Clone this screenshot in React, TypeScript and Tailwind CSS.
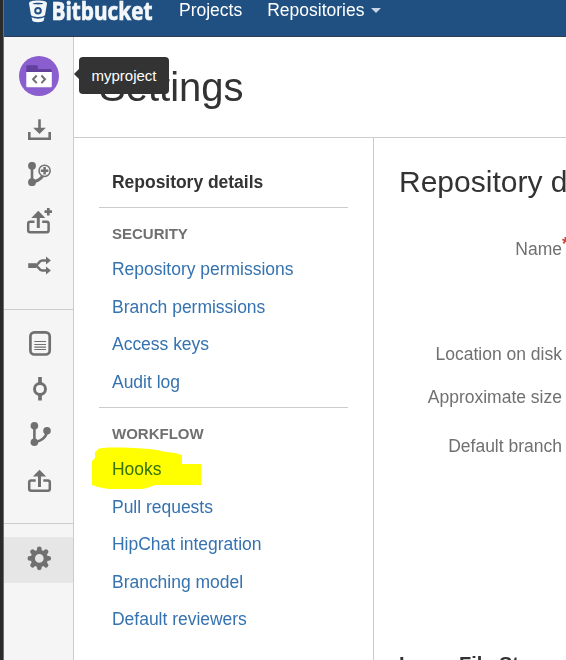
import React from 'react';

type IconProps = { children: React.ReactNode };

function Icon({ children }: IconProps) {
  return (
    <svg width="27" height="28" viewBox="0 0 27 28" fill="none" stroke="#707070" strokeWidth="2.6">
      {children}
    </svg>
  );
}

function SideButton({ children, active = false }: IconProps & { active?: boolean }) {
  return (
    <button
      className={`flex h-[46px] w-full shrink-0 items-center justify-center ${active ? 'bg-[#e6e6e6]' : ''}`}
    >
      {children}
    </button>
  );
}

function CloneIcon() {
  return (
    <Icon>
      <path d="M14.5 3.3V13" />
      <path d="M8.2 11.7h12.6L14.5 18z" fill="#707070" stroke="none" />
      <path d="M4.3 16v6.7h20.4V16" />
    </Icon>
  );
}

function CreateBranchIcon() {
  return (
    <Icon>
      <path d="M7 4v16" />
      <path d="M7 20c4-.3 7.500-2.200 10.500-5.500" strokeWidth="3" />
      <circle cx="7" cy="3.8" r="3.900" fill="#707070" stroke="none" />
      <circle cx="7" cy="20.200" r="3.900" fill="#707070" stroke="none" />
      <circle cx="19.600" cy="8.800" r="5.600" fill="#f5f5f5" strokeWidth="1.500" />
      <path d="M19.600 5v7.600M15.800 8.800h7.600" strokeWidth="2.500" />
    </Icon>
  );
}

function CreatePullRequestIcon() {
  return (
    <Icon>
      <path d="M13.300 20V9" strokeWidth="3" />
      <path d="M6.300 9.900h14L13.300 2.800z" fill="#707070" stroke="none" />
      <path d="M9.500 13.800H5.200a2 2 0 0 0-2 2v6.400a2 2 0 0 0 2 2h16.400a2 2 0 0 0 2-2v-6.400a2 2 0 0 0-2-2H17.200" strokeWidth="2.500" />
      <path d="M23.300 0v7.400M19.500 3.700H27" strokeWidth="2.700" />
    </Icon>
  );
}

function ForkIcon() {
  return (
    <Icon>
      <path d="M3.200 11.600h8.200" strokeWidth="4.800" />
      <path d="M22 6.500h-4.800c-3.200 0-4.200 5-6.400 5 2.200 0 3.200 5 6.400 5H22" strokeWidth="2.500" />
      <path d="M21 2.600 25.900 6.500 21 10.400zM21 12.600l4.900 3.900-4.900 3.900z" fill="#707070" stroke="none" />
    </Icon>
  );
}

function SourceIcon() {
  return (
    <Icon>
      <rect x="5.400" y="2.300" width="19.300" height="22.200" rx="4" strokeWidth="2.700" />
      <path d="M9.300 11.500h11.700M9.300 14.500h11.700M9.300 17.200h11.700M9.300 19.500h11.700" strokeWidth="1.200" />
    </Icon>
  );
}

function CommitsIcon() {
  return (
    <Icon>
      <circle cx="15" cy="13" r="5.500" strokeWidth="2.900" />
      <path d="M15 1v6M15 19v5.600" strokeWidth="3.700" />
    </Icon>
  );
}

function BranchesIcon() {
  return (
    <Icon>
      <path d="M9.400 4v16c5.500 0 12-4 12.800-11.500" strokeWidth="2.600" />
      <circle cx="9.400" cy="3.800" r="3.800" fill="#707070" stroke="none" />
      <circle cx="9.400" cy="20.200" r="3.800" fill="#707070" stroke="none" />
      <circle cx="22" cy="8.800" r="3.800" fill="#707070" stroke="none" />
    </Icon>
  );
}

function PullRequestsIcon() {
  return (
    <Icon>
      <path d="M14.500 19V8" strokeWidth="3" />
      <path d="M7.800 8.600h13.400L14.500 1.800z" fill="#707070" stroke="none" />
      <path d="M10.700 12.500H6.200a2 2 0 0 0-2 2v6.300a2 2 0 0 0 2 2h16.600a2 2 0 0 0 2-2v-6.300a2 2 0 0 0-2-2H18.300" strokeWidth="2.500" />
    </Icon>
  );
}

function SettingsIcon() {
  return (
    <Icon>
      <circle cx="14.300" cy="12.400" r="6.500" strokeWidth="4.300" />
      <path
        d="M14.300 4V3M14.300 20.800v1M5.900 12.400h-1M22.700 12.400h1M8.400 6.500l-.8-.8M20.200 18.300l.8.8M20.200 6.500l.8-.8M8.400 18.300l-.8.8"
        strokeWidth="4.800"
        strokeLinecap="round"
      />
    </Icon>
  );
}

function ProjectAvatar() {
  return (
    <svg width="40" height="40" viewBox="0 0 40 40">
      <circle cx="20" cy="20" r="20" fill="#8a5ecf" />
      <path d="M7.300 16V10.200a1 1 0 0 1 1-1h9.500a1 1 0 0 1 1 1V13h12.500a1.500 1.500 0 0 1 1.500 1.500V16z" fill="#62409c" />
      <path d="M7.300 16h25.500v14.300a1 1 0 0 1-1 1H8.300a1 1 0 0 1-1-1z" fill="#fff" />
      <path d="m17.700 19.500-3.600 3.800 3.600 3.800M22.400 19.500l3.600 3.800-3.600 3.800" fill="none" stroke="#707070" strokeWidth="2" />
    </svg>
  );
}

function Logo() {
  return (
    <svg className="block" width="128" height="37" viewBox="0 0 128 37">
      <path
        fill="#f4f7fa"
        fillRule="evenodd"
        d="M0 3.500C0 1.300 4 .5 9 .5s9 .8 9 3l-2 11.500c-.2 1-3.500 2-7 2s-6.800-1-7-2zM3.500 3.500C5 4.700 13 4.700 14.500 3.500 13 2.500 5 2.500 3.500 3.500zM9 6.900a3.800 3.800 0 1 0 0 7.600 3.800 3.800 0 0 0 0-7.600z"
      />
      <circle cx="9" cy="10.700" r="1.800" fill="#f4f7fa" />
      <path fill="#f4f7fa" d="M2.500 17c3.500 2.200 9.500 2.200 13 0l-.8 3.500c-.2 2.200-11.200 2.200-11.400 0z" />
      <text
        x="22.500"
        y="20.300"
        textLength="101"
        lengthAdjust="spacingAndGlyphs"
        stroke="#f4f7fa"
        strokeWidth="0.700"
        className="fill-[#f4f7fa] font-['Open_Sans',sans-serif] text-[24.500px] font-bold"
      >
        Bitbucket
      </text>
    </svg>
  );
}

function NavSection({ title, links }: { title: string; links: string[] }) {
  return (
    <section className="border-t border-[#ccc] pb-[6.5px]">
      <h3 className="flex h-[42.5px] items-center pt-[9.5px] pl-[13px] text-[15px] font-bold text-[#707070]">
        {title}
      </h3>
      <ul>
        {links.map((link) => (
          <li key={link} className="relative flex h-[37.5px] items-center pl-[13px] tracking-[-0.02px] text-[#3572b0]">
            <a>{link}</a>
            {link === 'Hooks' && (
              <svg
                className="absolute top-[-4px] left-[-7px] mix-blend-multiply"
                width="110"
                height="43"
                viewBox="0 0 110 43"
              >
                <path
                  fill="#ff0"
                  d="M0 14l3-3V5l4-3.500L16 .5h14l13 .5 14 1 8 1 9 2 9 1 7 2v9h19v21H63l-8 3-5 1H16L6 40l-6-2z"
                />
              </svg>
            )}
          </li>
        ))}
      </ul>
    </section>
  );
}

export default function App() {
  return (
    <div className="flex h-[660px] w-[566px] overflow-hidden bg-white font-['Liberation_Sans',Arial,sans-serif] text-[17.5px] whitespace-nowrap text-[#333]">
      <div className="w-1 shrink-0 border-r border-[#806858] bg-[#2b2b2b]" />
      <div className="flex min-w-0 flex-1 flex-col">
        <header className="flex h-[37px] shrink-0 border-b border-[#2e3d54] bg-[#205081] pl-[25px] text-white">
          <Logo />
          <nav className="flex h-5 items-center pl-[22px]">
            <a>Projects</a>
            <a className="ml-[25px]">Repositories</a>
            <span className="mt-px ml-1.5 border-x-[5px] border-t-[5px] border-x-transparent border-t-[#c8d5e3]" />
          </nav>
        </header>
        <div className="flex min-h-0 flex-1">
          <aside className="flex w-[70px] shrink-0 flex-col border-r border-[#ccc] bg-[#f5f5f5]">
            <div className="relative flex h-[70px] shrink-0 justify-center pt-[19px]">
              <ProjectAvatar />
              <div className="absolute top-5 left-[75px] z-10 flex h-[37px] w-[90px] items-center justify-center rounded bg-[#333] pt-0.5 text-[15px] text-white">
                myproject
                <span className="absolute top-3 left-[-5px] border-y-[5px] border-r-[5px] border-y-transparent border-r-[#333]" />
              </div>
            </div>
            <SideButton><CloneIcon /></SideButton>
            <SideButton><CreateBranchIcon /></SideButton>
            <SideButton><CreatePullRequestIcon /></SideButton>
            <SideButton><ForkIcon /></SideButton>
            <div className="mt-[18px] border-t border-[#ccc] pt-[11px]">
              <SideButton><SourceIcon /></SideButton>
              <SideButton><CommitsIcon /></SideButton>
              <SideButton><BranchesIcon /></SideButton>
              <SideButton><PullRequestsIcon /></SideButton>
            </div>
            <div className="mt-[18px] border-t border-[#ccc] pt-[13px]">
              <SideButton active><SettingsIcon /></SideButton>
            </div>
          </aside>
          <main className="flex min-w-0 flex-1 flex-col">
            <div className="flex h-[101px] shrink-0 items-center border-b border-[#ccc] pl-[25px]">
              <h1 className="text-[40px] leading-none">Settings</h1>
            </div>
            <div className="flex min-h-0 flex-1">
              <nav className="w-[300px] shrink-0 border-r border-[#ccc] pt-[25px] pr-[25px] pl-[25px]">
                <div className="mb-[6.5px] flex h-[37.5px] items-center pl-[13px] font-bold tracking-[-0.03px]">
                  Repository details
                </div>
                <NavSection
                  title="SECURITY"
                  links={['Repository permissions', 'Branch permissions', 'Access keys', 'Audit log']}
                />
                <NavSection
                  title="WORKFLOW"
                  links={['Hooks', 'Pull requests', 'HipChat integration', 'Branching model', 'Default reviewers']}
                />
              </nav>
              <section className="min-w-0 flex-1 overflow-hidden pt-[25px] pl-[25px]">
                <h2 className="h-[38px] text-[30px] leading-[38px]">Repository details</h2>
                <div className="flex w-[163px] flex-col items-end text-[#707070]">
                  <label className="relative mt-[38px] h-5 leading-5">
                    Name
                    <span className="absolute top-[-5px] left-full text-[17.5px] leading-5 font-bold text-[#d04437]">*</span>
                  </label>
                  <label className="mt-[85px] h-5 leading-5">Location on disk</label>
                  <label className="mt-[23px] h-5 leading-5">Approximate size</label>
                  <label className="mt-[29px] h-5 leading-5">Default branch</label>
                </div>
                <h3 className="mt-[196px] text-[20px] leading-6 font-bold">Large File Storage (LFS)</h3>
              </section>
            </div>
          </main>
        </div>
      </div>
    </div>
  );
}
